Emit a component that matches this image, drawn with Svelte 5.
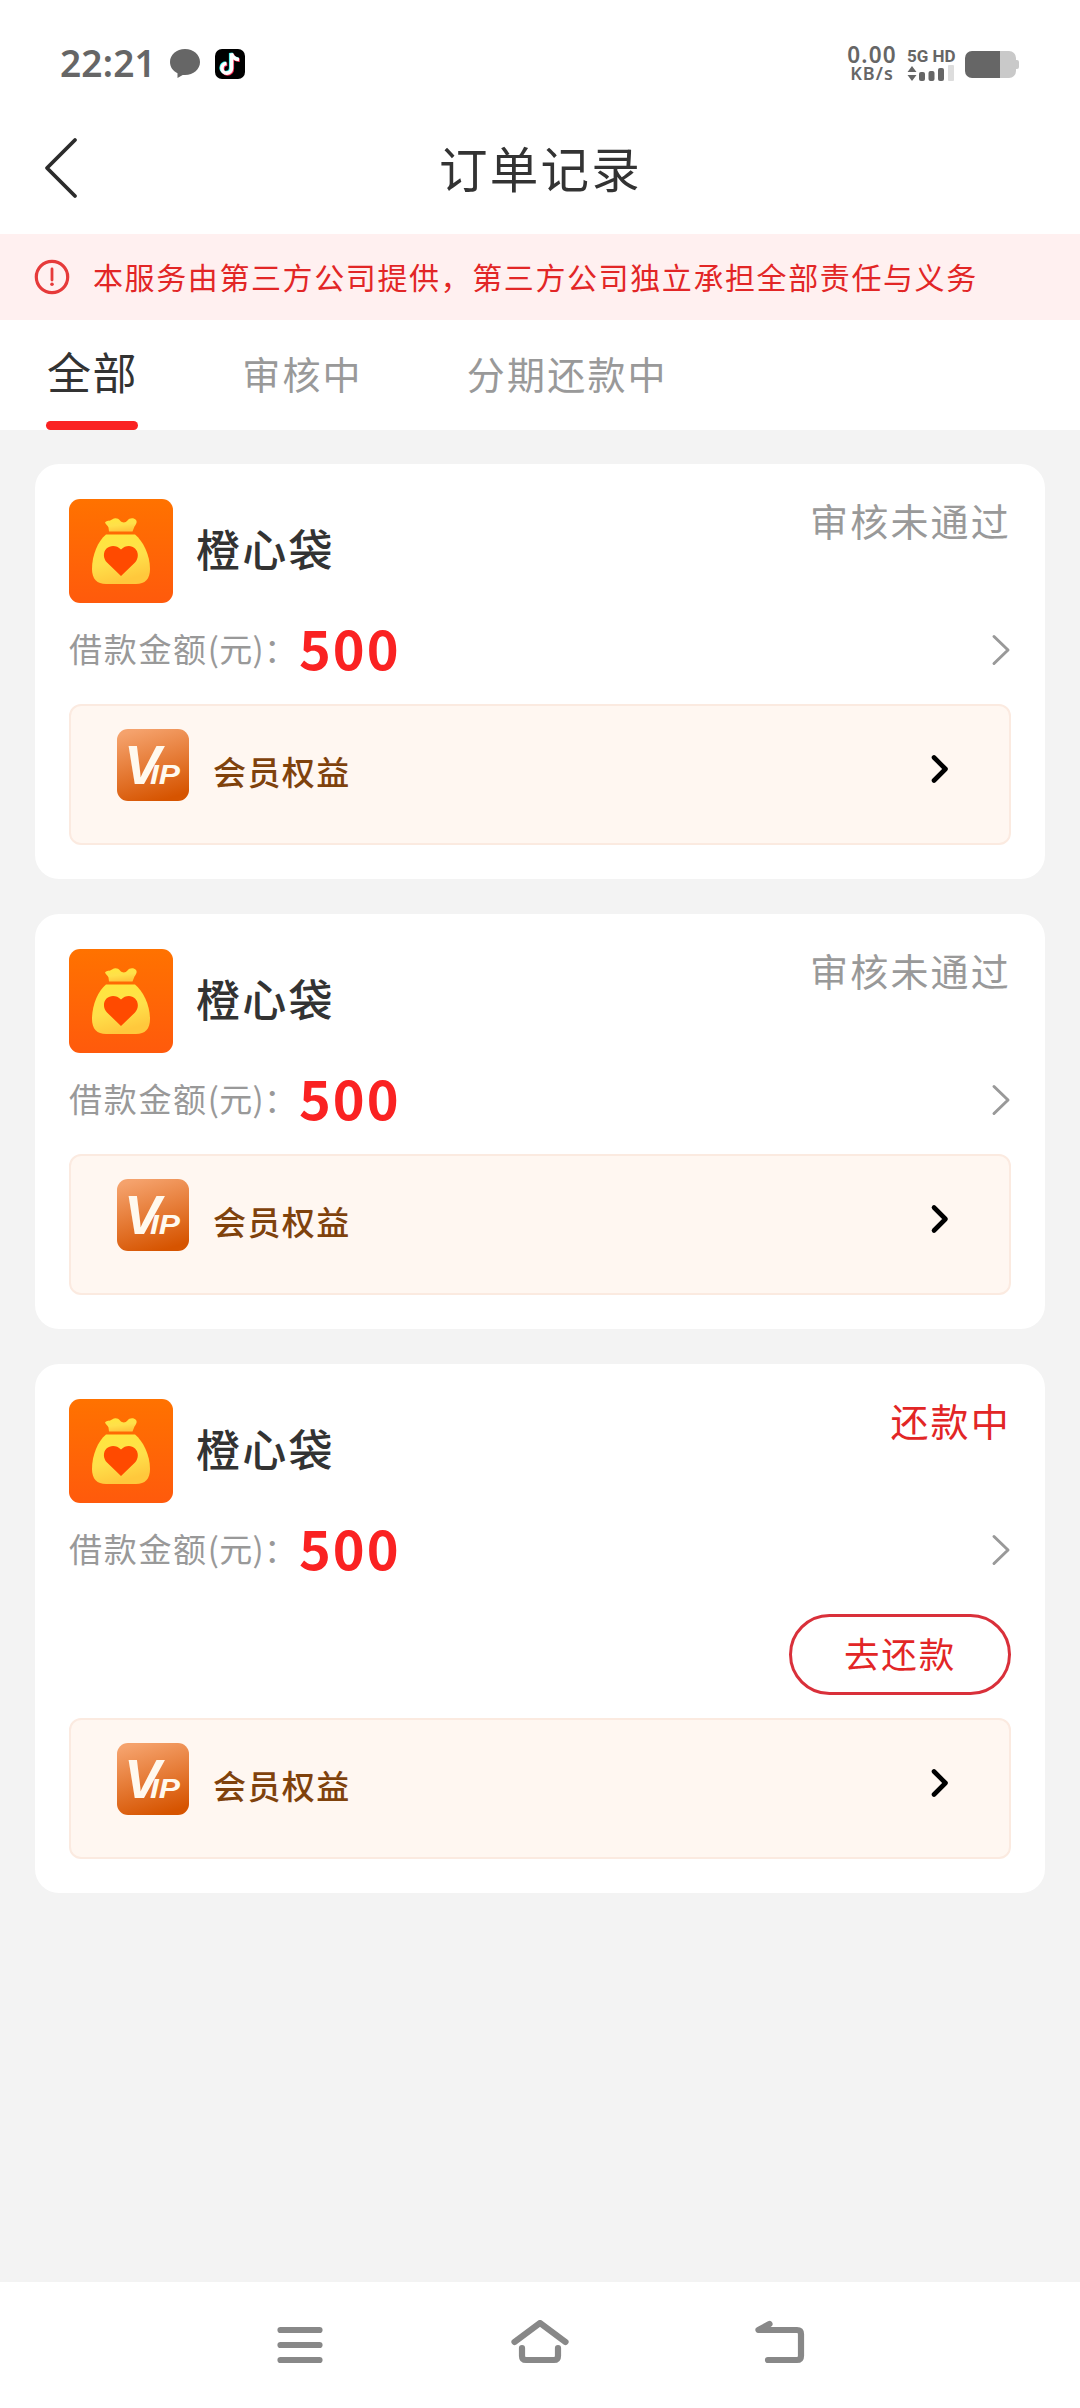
<script>
    let tabs = ["全部", "审核中", "分期还款中"];
    let current = "全部";

    let orders = [
        { id: 1, name: "橙心袋", amount: 500, status: "审核未通过", repaying: false },
        { id: 2, name: "橙心袋", amount: 500, status: "审核未通过", repaying: false },
        { id: 3, name: "橙心袋", amount: 500, status: "还款中", repaying: true },
    ];
</script>

<div class="page">
    <div class="statusbar">
        <span class="time">22:21</span>
        <svg class="bubble" width="30" height="30" viewBox="0 0 30 30">
            <path d="M15 0C23.500 0 30 5.800 30 13s-6.500 13-15 13c-1 0-1.500 0-2.300-.1L7.500 29V24.200C3 22 0 18 0 13 0 5.800 6.500 0 15 0z" fill="#666" />
        </svg>
        <svg class="tiktok" width="30" height="30" viewBox="0 0 30 30">
            <rect width="30" height="30" rx="7" fill="#000" />
            <g fill="none" stroke-width="3.600">
                <path d="M11.500 14.500a4.800 4.800 0 1 0 5 4.800V4.500c.8 3.500 3.200 5.800 7.500 6" stroke="#25f4ee" transform="translate(-.8 -.5)" />
                <path d="M11.500 14.500a4.800 4.800 0 1 0 5 4.800V4.500c.8 3.500 3.200 5.800 7.500 6" stroke="#fe2c55" transform="translate(.8 .8)" />
                <path d="M11.500 14.500a4.800 4.800 0 1 0 5 4.800V4.500c.8 3.500 3.200 5.800 7.500 6" stroke="#fff" />
            </g>
        </svg>
        <div class="speed">
            <span class="rate">0.00</span>
            <span class="unit">KB/s</span>
        </div>
        <div class="network">
            <span class="net-type">5G HD</span>
            <svg width="48" height="17" viewBox="0 0 48 17">
                <path d="M5 1l4.500 6h-9zM5 16l4.500-6h-9z" fill="#666" />
                <rect x="12" y="7" width="6" height="9" rx="2" fill="#666" />
                <rect x="21.500" y="6" width="6" height="10" rx="2" fill="#666" />
                <rect x="31" y="3" width="6" height="13" rx="2" fill="#666" />
                <rect x="41" y="0" width="6" height="16" rx="1" fill="#ddd" />
            </svg>
        </div>
        <svg class="battery" width="54" height="27" viewBox="0 0 54 27">
            <path d="M34 0h10a7 7 0 0 1 7 7v2h1a2 2 0 0 1 2 2v5a2 2 0 0 1-2 2h-1v2a7 7 0 0 1-7 7H34z" fill="#c9c9c9" />
            <path d="M7 0h28v27H7a7 7 0 0 1-7-7V7a7 7 0 0 1 7-7z" fill="#666" />
        </svg>
    </div>

    <header>
        <svg class="back" width="36" height="64" viewBox="0 0 36 64">
            <path d="M32 4L4 32l28 28" fill="none" stroke="#2b2b2b" stroke-width="3.800" stroke-linecap="round" stroke-linejoin="round" />
        </svg>
        <h1>订单记录</h1>
    </header>

    <div class="notice">
        <svg width="36" height="36" viewBox="0 0 36 36">
            <circle cx="18" cy="18" r="15.700" fill="none" stroke="#e63a3a" stroke-width="3.200" />
            <path d="M18 10v11" stroke="#e63a3a" stroke-width="2.800" stroke-linecap="round" />
            <circle cx="18" cy="25.200" r="1.800" fill="#e63a3a" />
        </svg>
        <span>本服务由第三方公司提供，第三方公司独立承担全部责任与义务</span>
    </div>

    <nav class="tabs">
        {#each tabs as tab}
            <button class="tab" class:active={tab === current} on:click={() => (current = tab)}>{tab}</button>
        {/each}
    </nav>

    <main>
        {#each orders as order (order.id)}
            <section class="card">
                <div class="head">
                    <svg class="logo" width="104" height="104" viewBox="0 0 104 104">
                        <defs>
                            <linearGradient id="bg{order.id}" x1="0" y1="0" x2="0" y2="1">
                                <stop offset="0" stop-color="#ff7200" />
                                <stop offset="1" stop-color="#ff5a0c" />
                            </linearGradient>
                            <linearGradient id="bag{order.id}" x1="0" y1="0" x2="0.300" y2="1">
                                <stop offset="0" stop-color="#ffe73c" />
                                <stop offset="0.600" stop-color="#ffe04a" />
                                <stop offset="1" stop-color="#ffc83c" />
                            </linearGradient>
                        </defs>
                        <rect width="104" height="104" rx="11" fill="url(#bg{order.id})" />
                        <path d="M36 23.500C38 21 40.500 22.500 43 20.500C46 18.500 49 19 51 21.500C53.500 24.300 56.500 24 58.500 21.500C60.500 18.500 65 18.500 67 21C68.500 23 67 25.500 65.500 27.500L63.500 32.500H40L39.500 28.500C39 26.500 36.500 25.500 36 23.500Z" fill="url(#bag{order.id})" />
                        <path d="M37 35.500H66C74 42 81 56 81 70C81 80 76 85 67 85H37C28 85 23 80 23 70C23 56 29 42 37 35.500Z" fill="url(#bag{order.id})" />
                        <path d="M52 77L38 63.500C34 59.500 34 53 37.500 49.500C41.500 46 47.500 46 52 50.500C56.500 46 62.500 46 66 49.500C69.800 53 69.800 59.500 66 63.500Z" fill="#ff4a00" />
                    </svg>
                    <h2>{order.name}</h2>
                    <span class="status" class:repaying={order.repaying}>{order.status}</span>
                </div>

                <div class="amount">
                    <span class="label">借款金额<span class="currency">(元)</span>：</span>
                    <strong>{order.amount}</strong>
                    <svg width="20" height="32" viewBox="0 0 20 32">
                        <path d="M3 2.500L17 16L3 29.500" fill="none" stroke="#999" stroke-width="3" stroke-linecap="round" stroke-linejoin="round" />
                    </svg>
                </div>

                {#if order.repaying}
                    <button class="repay">去还款</button>
                {/if}

                <div class="vip">
                    <svg class="vip-icon" width="72" height="72" viewBox="0 0 72 72">
                        <defs>
                            <linearGradient id="vip{order.id}" x1="0.300" y1="0" x2="0.600" y2="1">
                                <stop offset="0" stop-color="#f5a26c" />
                                <stop offset="1" stop-color="#d65400" />
                            </linearGradient>
                        </defs>
                        <rect width="72" height="72" rx="11" fill="url(#vip{order.id})" />
                        <text class="vip-v" x="7" y="55" textLength="37" lengthAdjust="spacingAndGlyphs">V</text>
                        <text class="vip-ip" x="33" y="55" textLength="30" lengthAdjust="spacingAndGlyphs">IP</text>
                    </svg>
                    <span>会员权益</span>
                    <svg class="more" width="20" height="32" viewBox="0 0 20 32">
                        <path d="M4 4.500L15.500 16L4 27.500" fill="none" stroke="#000" stroke-width="4.600" stroke-linecap="round" stroke-linejoin="round" />
                    </svg>
                </div>
            </section>
        {/each}
    </main>

    <footer>
        <svg width="56" height="50" viewBox="0 0 56 50">
            <path d="M8.500 10h39M8.500 25h39M8.500 40h39" />
        </svg>
        <svg width="64" height="50" viewBox="0 0 64 50">
            <path d="M6.500 22L32 3L57.500 22M14 28v8q0 4 4 4h28q4 0 4-4v-8" />
        </svg>
        <svg width="56" height="50" viewBox="0 0 56 50">
            <path d="M17.500 4L6.500 10H45q4 0 4 4V36q0 4-4 4H16" />
        </svg>
    </footer>
</div>

<style>
    :global(body) {
        background: #f3f3f3;
    }
    .page {
        display: flex;
        flex-direction: column;
        width: 1080px;
        height: 2408px;
        font-family: "Noto Sans CJK SC", sans-serif;
        color: #333;
        background: #f3f3f3;
    }
    button {
        all: unset;
        box-sizing: border-box;
        cursor: pointer;
    }
    svg {
        display: block;
        flex-shrink: 0;
    }

    .statusbar {
        display: flex;
        align-items: center;
        height: 128px;
        box-sizing: border-box;
        padding-left: 60px;
        color: #666;
        background: #fff;
        font-family: "Noto Sans", sans-serif;
    }
    .time {
        width: 110px;
        padding-bottom: 3px;
        font-size: 37px;
        font-weight: 600;
        letter-spacing: 0.200px;
    }
    .tiktok {
        margin-left: 15px;
    }
    .speed {
        display: flex;
        flex-direction: column;
        align-items: center;
        width: 56px;
        margin-left: 599px;
        padding-bottom: 1px;
        font-weight: 600;
    }
    .rate {
        font-size: 22.500px;
        line-height: 19px;
        letter-spacing: 1.200px;
    }
    .unit {
        font-size: 18px;
        line-height: 19px;
        letter-spacing: 1px;
    }
    .network {
        display: flex;
        flex-direction: column;
        width: 50px;
        margin-left: 7px;
    }
    .net-type {
        font-family: Roboto, sans-serif;
        font-size: 17px;
        font-weight: 700;
        line-height: 18px;
        white-space: nowrap;
    }
    .battery {
        margin-left: 8px;
    }

    header {
        display: flex;
        align-items: center;
        height: 106px;
        padding: 0 43px;
        background: #fff;
    }
    .back {
        margin-bottom: 26px;
    }
    h1 {
        flex: 1;
        margin: 0 35px 28px 0;
        font-size: 48.500px;
        font-weight: 400;
        line-height: 60px;
        letter-spacing: 2.300px;
        text-align: center;
    }

    .notice {
        display: flex;
        align-items: center;
        height: 86px;
        padding-left: 34px;
        color: #e22626;
        background: #fff0f0;
        font-size: 30px;
        letter-spacing: 1.600px;
    }
    .notice span {
        margin-left: 23px;
        padding-bottom: 3px;
        white-space: nowrap;
    }

    .tabs {
        display: flex;
        gap: 104px;
        height: 110px;
        padding-left: 46px;
        background: #fff;
    }
    .tab {
        height: 110px;
        border-bottom: 9px solid transparent;
        font-size: 38px;
        line-height: 105px;
        letter-spacing: 2.200px;
        color: #999;
    }
    .tab.active {
        color: #333;
        font-size: 44px;
        line-height: 102px;
        letter-spacing: 1.600px;
        text-indent: 1px;
        border: none;
    }
    .tab.active::after {
        content: "";
        display: block;
        height: 9px;
        margin-top: -1px;
        border-radius: 5px;
        background: #fa2222;
    }

    main {
        display: flex;
        flex: 1;
        flex-direction: column;
        gap: 35px;
        padding: 34px 35px;
    }
    .card {
        padding: 35px 34px 34px;
        border-radius: 24px;
        background: #fff;
    }
    .head {
        display: flex;
        align-items: center;
    }
    h2 {
        flex: 1;
        margin: 0 0 7px 23px;
        font-size: 44px;
        font-weight: 500;
        line-height: 60px;
        letter-spacing: 2.300px;
    }
    .status {
        align-self: flex-start;
        color: #999;
        font-size: 38px;
        line-height: 42px;
        letter-spacing: 2.200px;
    }
    .status.repaying {
        color: #e22626;
    }
    .amount {
        display: flex;
        align-items: center;
        height: 93px;
        margin-bottom: -1px;
    }
    .label {
        width: 230px;
        padding-bottom: 3px;
        color: #999;
        font-size: 33px;
        letter-spacing: 1.700px;
        white-space: nowrap;
    }
    .currency {
        letter-spacing: 0.300px;
    }
    strong {
        flex: 1;
        padding-bottom: 6px;
        color: #fa2222;
        font-size: 54px;
        font-weight: 700;
        line-height: 60px;
        letter-spacing: 2px;
    }
    .repay {
        display: block;
        width: 222px;
        height: 81px;
        margin: 19px 0 23px auto;
        padding-bottom: 4px;
        border: 3px solid #d9303a;
        border-radius: 41px;
        color: #e22626;
        font-size: 35.500px;
        line-height: 66px;
        letter-spacing: 1.900px;
        text-align: center;
    }
    .vip {
        display: flex;
        align-items: flex-start;
        height: 141px;
        box-sizing: border-box;
        margin-top: 9px;
        padding: 23px 59px 0 46px;
        border: 2px solid #fbeae0;
        border-radius: 12px;
        background: #fff7f1;
    }
    .vip span {
        flex: 1;
        margin-left: 24px;
        color: #7f420c;
        font-size: 33px;
        font-weight: 500;
        line-height: 84px;
        letter-spacing: 1.400px;
    }
    .vip-icon text {
        fill: #fff9ee;
        font-family: "Liberation Sans", sans-serif;
        font-style: italic;
        font-weight: 700;
    }
    .vip-v {
        font-size: 55px;
    }
    .vip-ip {
        font-size: 27px;
    }
    .more {
        margin-top: 24px;
    }

    footer {
        display: flex;
        justify-content: center;
        gap: 180px;
        height: 126px;
        box-sizing: border-box;
        padding-top: 38px;
        background: #fff;
    }
    footer path {
        fill: none;
        stroke: #888;
        stroke-width: 6.200;
        stroke-linecap: round;
        stroke-linejoin: round;
    }
</style>
